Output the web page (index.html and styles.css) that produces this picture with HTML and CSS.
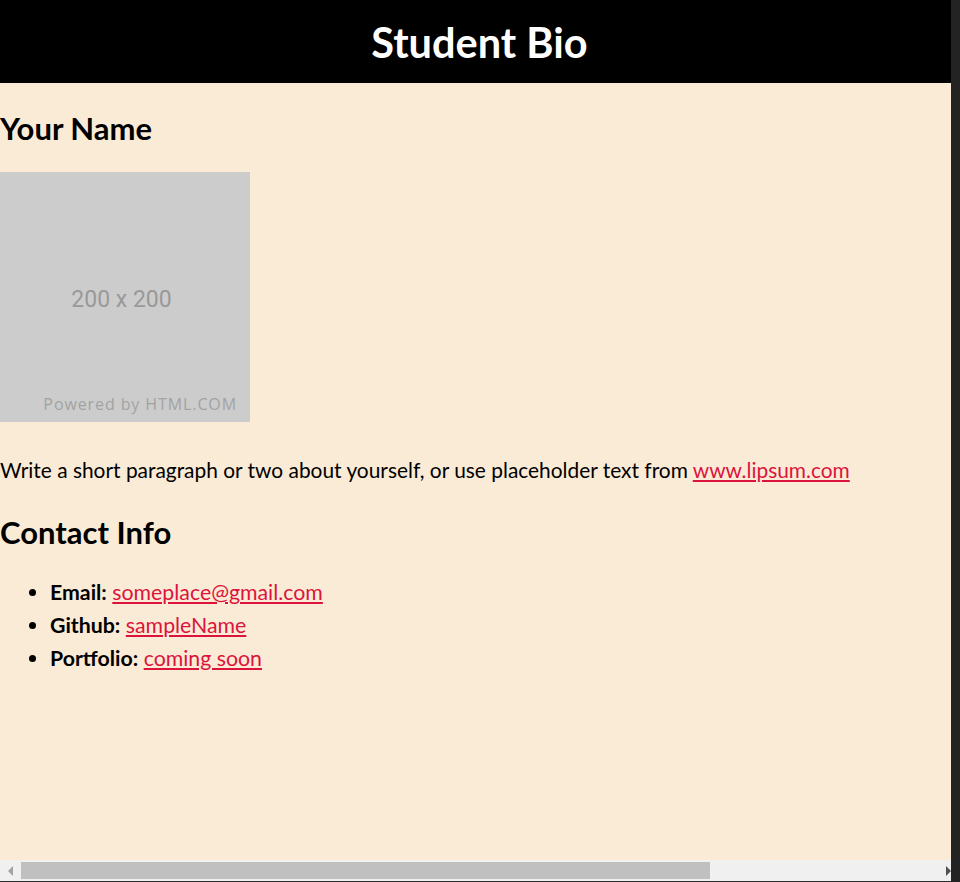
FILE: index.html
```html
<!DOCTYPE html>
<html lang="en">
<head>
<meta charset="utf-8">
<title>Student Bio</title>
<link rel="stylesheet" href="styles.css">
</head>
<body>
<div class="window">
  <div class="page">
    <header class="top">
      <h1 class="title">Student Bio</h1>
    </header>
    <main class="content">
      <h2 class="heading name">Your Name</h2>
      <div class="placeholder">
        <span class="ph-size">200 x 200</span>
        <span class="ph-credit">Powered by HTML.COM</span>
      </div>
      <p class="about">Write a short paragraph or two about yourself, or use placeholder text from <a href="#">www.lipsum.com</a></p>
      <h2 class="heading contact">Contact Info</h2>
      <ul class="contacts">
        <li><b>Email:</b> <a href="#">someplace@gmail.com</a></li>
        <li><b>Github:</b> <a href="#">sampleName</a></li>
        <li><b>Portfolio:</b> <a href="#">coming soon</a></li>
      </ul>
    </main>
  </div>
  <div class="hscroll">
    <span class="arrow left"></span>
    <span class="thumb"></span>
    <span class="arrow right"></span>
  </div>
</div>
<div class="edge"></div>
</body>
</html>
```

FILE: styles.css
```css
html, body {
  margin: 0;
  padding: 0;
  height: 882px;
  overflow: hidden;
}
body {
  display: flex;
  background: #232323;
  font-family: Lato, "Open Sans", sans-serif;
  color: #000;
}
.window {
  width: 951px;
  display: flex;
  flex-direction: column;
}
.page {
  flex: 1;
  background: #faebd7;
}
.top {
  background: #000;
  height: 83px;
  display: flex;
  align-items: center;
  justify-content: center;
  padding-left: 8px;
}
.title {
  margin: 0;
  color: #fff;
  font-size: 41.5px;
  font-weight: 700;
  line-height: 46px;
}
.content {
  padding: 0;
}
.heading {
  margin: 0;
  font-size: 31px;
  font-weight: 700;
  line-height: 36px;
}
.name {
  margin-top: 27px;
}
.placeholder {
  margin-top: 26px;
  width: 250px;
  height: 250px;
  background: #cccccc;
  position: relative;
  display: flex;
  align-items: center;
  justify-content: center;
}
.ph-size {
  font-family: Roboto, "Liberation Sans", sans-serif;
  font-size: 23px;
  color: #999999;
  margin-left: -7px;
  margin-top: 4px;
}
.ph-credit {
  position: absolute;
  right: 13px;
  bottom: 7px;
  font-family: "Open Sans", sans-serif;
  font-size: 16px;
  letter-spacing: 0.9px;
  color: #a3a3a3;
}
.about {
  margin: 34px 0 0;
  font-size: 20.9px;
  line-height: 28px;
}
a {
  color: #dc143c;
}
.contact {
  margin-top: 30px;
}
.contacts {
  margin: 26px 0 0;
  padding-left: 50px;
  font-size: 21.3px;
  line-height: 33px;
}
.hscroll {
  height: 21px;
  background: #f0f0f0;
  border-bottom: 1px solid #2b2b2b;
  position: relative;
  display: flex;
  align-items: center;
}
.thumb {
  position: absolute;
  left: 21px;
  top: 2px;
  width: 689px;
  height: 17px;
  background: #c0c0c0;
}
.arrow {
  position: absolute;
  top: 6px;
  width: 0;
  height: 0;
  border-top: 5px solid transparent;
  border-bottom: 5px solid transparent;
}
.arrow.left {
  left: 8px;
  border-right: 5px solid #a3a3a3;
}
.arrow.right {
  right: 0;
  border-left: 5px solid #505050;
}
.edge {
  width: 9px;
  background: #232323;
}
```
